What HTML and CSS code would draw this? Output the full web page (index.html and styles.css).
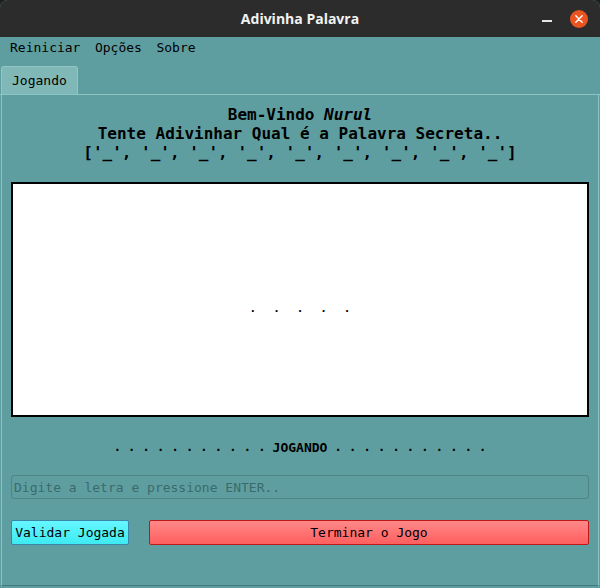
FILE: index.html
```html
<!DOCTYPE html>
<html lang="pt">
<head>
<meta charset="utf-8">
<title>Adivinha Palavra</title>
<link rel="stylesheet" href="styles.css">
</head>
<body>
<div class="window">
  <header class="titlebar">
    <span class="spacer"></span>
    <span class="title">Adivinha Palavra</span>
    <span class="controls">
      <span class="minimize"></span>
      <span class="close">
        <svg width="18" height="18" viewBox="0 0 18 18"><circle cx="9" cy="9" r="9" fill="#e95420"/><path d="M5.8 5.8 L12.2 12.2 M12.2 5.8 L5.8 12.2" stroke="#fff" stroke-width="1.4" stroke-linecap="round"/></svg>
      </span>
    </span>
  </header>
  <nav class="menubar">
    <span class="menu-item">Reiniciar</span>
    <span class="menu-item">Opções</span>
    <span class="menu-item">Sobre</span>
  </nav>
  <div class="tabs">
    <div class="tab">Jogando</div>
  </div>
  <section class="pane">
    <div class="heading">
      <div>Bem-Vindo <em>Nurul</em></div>
      <div>Tente Adivinhar Qual é a Palavra Secreta..</div>
      <div>['_', '_', '_', '_', '_', '_', '_', '_', '_']</div>
    </div>
    <div class="canvas"><span class="canvas-dots">. . . . .</span></div>
    <div class="status"><span class="dots">. . . . . . . . . . . </span><span class="state">JOGANDO</span><span class="dots"> . . . . . . . . . . .</span></div>
    <input class="entry" type="text" placeholder="Digite a letra e pressione ENTER..">
    <div class="buttons">
      <button class="btn btn-validate">Validar Jogada</button>
      <button class="btn btn-end">Terminar o Jogo</button>
    </div>
  </section>
</div>
</body>
</html>
```
FILE: styles.css
```css
html, body {
  margin: 0;
  padding: 0;
  background: #1e1e1e;
}
.window {
  width: 600px;
  height: 588px;
  background: #5f9ea0;
  display: flex;
  flex-direction: column;
  border-radius: 8px 8px 0 0;
  overflow: hidden;
  font-family: "DejaVu Sans Mono", monospace;
  font-size: 13px;
  color: #000;
}
.titlebar {
  height: 37px;
  flex: none;
  background: #2c2c2c;
  display: grid;
  grid-template-columns: 1fr auto 1fr;
  align-items: center;
}
.title {
  font-family: "Open Sans", "DejaVu Sans", sans-serif;
  font-weight: 700;
  font-size: 14px;
  color: #f2f2f2;
}
.controls {
  display: flex;
  justify-content: flex-end;
  align-items: center;
  gap: 18px;
  padding-right: 12px;
}
.minimize {
  width: 10px;
  height: 2px;
  background: #e6e6e6;
  margin-top: 4px;
}
.close {
  display: flex;
  width: 18px;
  height: 18px;
}
.menubar {
  height: 22px;
  flex: none;
  display: flex;
  align-items: center;
  padding-left: 10px;
  gap: 14.5px;
  padding-bottom: 2px;
  box-sizing: border-box;
}
.tabs {
  height: 36px;
  flex: none;
  display: flex;
  align-items: flex-end;
  padding-left: 1px;
  border-bottom: 1px solid #8cc4c4;
  box-sizing: border-box;
}
.tab {
  width: 77px;
  height: 28px;
  box-sizing: border-box;
  background: #80b8b8;
  border: 1px solid #90c6c6;
  border-bottom: none;
  border-radius: 3px 3px 0 0;
  display: flex;
  align-items: center;
  padding-left: 10px;
  padding-bottom: 1px;
}
.pane {
  flex: 1;
  margin: 0 1px 2px 1px;
  border-left: 1px solid #8cc4c4;
  border-right: 1px solid #8cc4c4;
  border-bottom: 1px solid #3f7c7e;
  padding: 9px 9px 0 9px;
  display: flex;
  flex-direction: column;
}
.heading {
  text-align: center;
  font-weight: 700;
  font-size: 16px;
  line-height: 19px;
  padding-top: 1px;
}
.heading em {
  font-style: italic;
}
.canvas {
  margin-top: 20px;
  height: 235px;
  box-sizing: border-box;
  background: #fff;
  border: 2px solid #000;
  display: flex;
  align-items: center;
  justify-content: center;
}
.canvas-dots {
  font-size: 11px;
  font-weight: 700;
  letter-spacing: 4px;
  word-spacing: 2.3px;
  margin-top: 17px;
  margin-left: 4px;
}
.status {
  margin-top: 21px;
  height: 18px;
  display: flex;
  justify-content: center;
  align-items: center;
  white-space: pre;
  font-weight: 700;
}
.status .dots {
  font-size: 12px;
}
.status .state {
  font-size: 13px;
}
.entry {
  margin-top: 19px;
  height: 24px;
  box-sizing: border-box;
  background: #5f9ea0;
  border: 1px solid #4d8486;
  border-radius: 3px;
  font-family: "DejaVu Sans Mono", monospace;
  font-size: 13px;
  padding: 0 2px;
  outline: none;
}
.entry::placeholder {
  color: #3a6b6c;
}
.buttons {
  margin-top: 21px;
  display: flex;
  gap: 20px;
}
.btn {
  height: 25px;
  box-sizing: border-box;
  font-family: "DejaVu Sans Mono", monospace;
  font-size: 13px;
  color: #000;
  border-radius: 2px;
  padding: 0 3px;
}
.btn-validate {
  width: 118px;
  background: linear-gradient(#66f7ff, #3eeaf2);
  border: 1px solid #3a85a8;
}
.btn-end {
  flex: 1;
  background: linear-gradient(#ff8888, #ff5f5f);
  border: 1px solid #c01818;
}
```
